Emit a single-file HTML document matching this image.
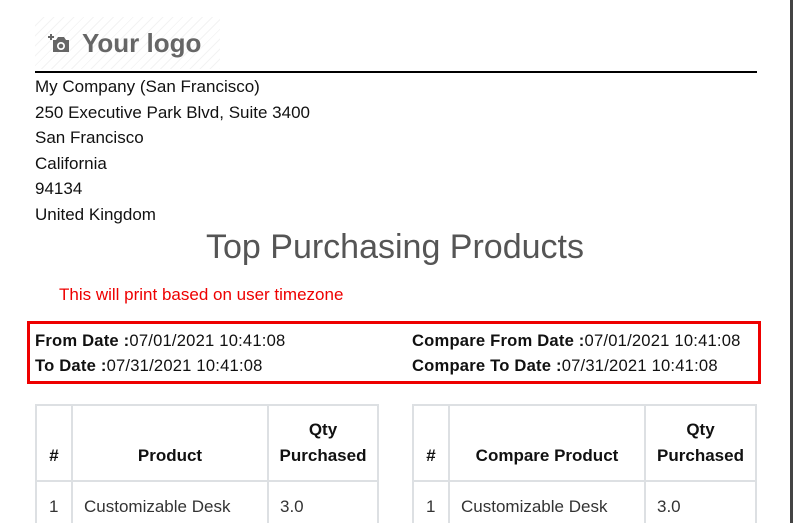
<!DOCTYPE html>
<html><head><style>
html,body{margin:0;width:794px;height:523px;overflow:hidden}
body{background:#fff;font-family:"Liberation Sans",sans-serif;color:#222;position:relative}
.a{position:absolute}
.bar{right:1px;top:0;width:3px;height:523px;background:#444}
.logo{left:35px;top:17px;width:185px;height:52px;background:repeating-linear-gradient(135deg,#fff 0 6px,#f3f3f3 6px 7px);}
.logo span{position:absolute;left:47px;top:11px;font-size:26px;font-weight:bold;color:#666}
.hr{left:35px;top:71px;width:722px;height:2px;background:#000}
.addr{left:35px;top:74px;font-size:17px;line-height:25.6px;color:#111}
.title{left:0;width:790px;top:228px;text-align:center;font-size:34px;color:#555}
.tz{left:59px;top:285px;color:#e00;font-size:17px}
.box{left:27px;top:321px;width:728px;height:57px;border:3px solid #e00}
.box div{position:absolute;font-size:16.6px;color:#111;letter-spacing:0.2px}
b{font-weight:bold}
table{position:absolute;border-collapse:collapse;top:404px;font-size:17px;color:#111}
td,th{border:2px solid #dde0e3;padding:0}
th{height:74px;vertical-align:middle;text-align:center;line-height:26px}
td{height:50px;padding-left:11px;color:#333}
</style></head><body>
<div class="a bar"></div>
<div class="a logo"><svg class="a" style="left:12px;top:15px" width="24" height="22" viewBox="0 0 24 22"><path d="M3 2h2v2h2v2H5v2H3V6H1V4h2z" fill="#666"/><path d="M6 8h3l2-3h6l2 3h3v12H6z" fill="#666"/><circle cx="14" cy="14" r="4" fill="#fff"/><circle cx="14" cy="14" r="2.3" fill="#666"/></svg><span>Your logo</span></div>
<div class="a hr"></div>
<div class="a addr">My Company (San Francisco)<br>250 Executive Park Blvd, Suite 3400<br>San Francisco<br>California<br>94134<br>United Kingdom</div>
<div class="a title">Top Purchasing Products</div>
<div class="a tz">This will print based on user timezone</div>
<div class="a box">
<div style="left:5px;top:7px"><b>From Date :</b>07/01/2021 10:41:08</div>
<div style="left:5px;top:32px"><b>To Date :</b>07/31/2021 10:41:08</div>
<div style="left:382px;top:7px"><b>Compare From Date :</b>07/01/2021 10:41:08</div>
<div style="left:382px;top:32px"><b>Compare To Date :</b>07/31/2021 10:41:08</div>
</div>
<table style="left:35px;width:344px"><tr><th style="width:34px">&nbsp;<br>#</th><th style="width:194px">&nbsp;<br>Product</th><th>Qty<br>Purchased</th></tr>
<tr><td style="padding-left:12px">1</td><td>Customizable Desk</td><td>3.0</td></tr></table>
<table style="left:412px;width:345px"><tr><th style="width:34px">&nbsp;<br>#</th><th style="width:194px">&nbsp;<br>Compare Product</th><th>Qty<br>Purchased</th></tr>
<tr><td style="padding-left:12px">1</td><td>Customizable Desk</td><td>3.0</td></tr></table>
</body></html>
